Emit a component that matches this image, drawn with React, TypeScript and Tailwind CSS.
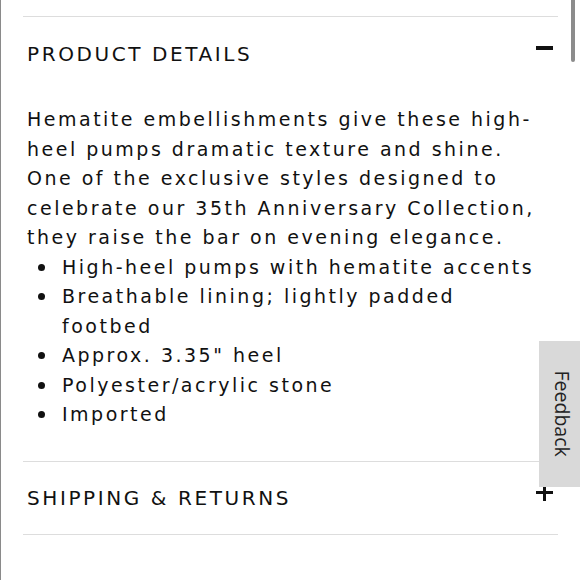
import React from 'react';

const BULLETS: React.ReactNode[] = [
  'High-heel pumps with hematite accents',
  <>Breathable lining; lightly padded<br />footbed</>,
  'Approx. 3.35" heel',
  'Polyester/acrylic stone',
  'Imported',
];

export default function App() {
  return (
    <div className="relative w-[580px] h-[580px] overflow-hidden bg-white border-l border-[#8a8a8a] font-['DejaVu_Sans',sans-serif] text-[#111]">
      {/* scrollbar thumb */}
      <div className="absolute right-[5px] top-0 w-[4px] h-[62px] rounded-b-full bg-[#8c8c8c]" />

      <div className="mx-[22px] pt-[16px]">
        {/* Product details */}
        <div className="border-t border-[#dddddd]">
          <div className="flex items-center justify-between h-[74px] pl-[4px]">
            <h2 className="text-[20px] tracking-[2.6px] font-normal">PRODUCT DETAILS</h2>
            <span className="block w-[17px] h-[3.5px] bg-[#111] mr-[5px] -mt-[12px]" />
          </div>

          <div className="mt-[14px] pl-[4px] pb-[31px]">
            <p className="text-[19px] leading-[29.5px] tracking-[2.5px]">
              Hematite embellishments give these high-<br />
              heel pumps dramatic texture and shine.<br />
              One of the exclusive styles designed to<br />
              celebrate our 35th Anniversary Collection,<br />
              they raise the bar on evening elegance.
            </p>
            <ul className="text-[19px] leading-[29.5px] tracking-[2.5px]">
              {BULLETS.map((b, i) => (
                <li key={i} className="flex">
                  <span className="w-[35px] shrink-0 pt-[11px] pl-[11px]">
                    <span className="block w-[7px] h-[7px] rounded-full bg-[#111]" />
                  </span>
                  <span>{b}</span>
                </li>
              ))}
            </ul>
          </div>
        </div>

        {/* Shipping & returns */}
        <div className="border-t border-b border-[#dddddd]">
          <div className="flex items-center justify-between h-[72px] pl-[4px]">
            <h2 className="text-[20px] tracking-[2.6px] font-normal">SHIPPING &amp; RETURNS</h2>
            <span className="relative block w-[17px] h-[17px] mr-[5px] -mt-[10px]">
              <span className="absolute left-0 top-[7px] w-[17px] h-[3px] bg-[#111]" />
              <span className="absolute left-[7px] top-0 w-[3px] h-[17px] bg-[#111]" />
            </span>
          </div>
        </div>
      </div>

      {/* Feedback tab */}
      <div className="absolute right-0 top-[341px] w-[41px] h-[146px] pl-[5px] bg-[#d9d9d9] flex items-center justify-center">
        <span className="rotate-90 whitespace-nowrap text-[19.5px] text-[#222] font-['Open_Sans',sans-serif]">Feedback</span>
      </div>
    </div>
  );
}
